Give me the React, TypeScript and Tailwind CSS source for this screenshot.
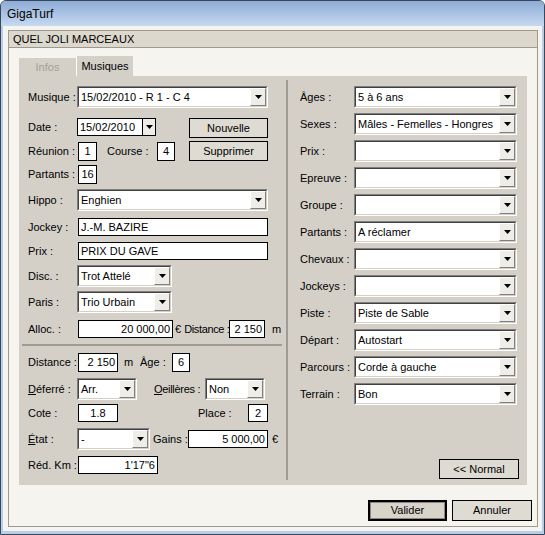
import React from 'react';

// petite flèche des listes déroulantes
const Arrow = () => (
  <svg width="7" height="4" viewBox="0 0 7 4">
    <path d="M0 0h7L3.5 4z" fill="#000" />
  </svg>
);

const Combo = ({ w, value = '' }: { w: string; value?: string }) => (
  <div className={`${w} h-[22px] shrink-0 border border-t-[#808080] border-l-[#808080] border-r-white border-b-white`}>
    <div className="h-full flex bg-white border border-t-[#404040] border-l-[#404040] border-r-[#d4d0c8] border-b-[#d4d0c8]">
      <div className="flex-1 pl-[2px] flex items-center whitespace-nowrap overflow-hidden">{value}</div>
      <div className="w-[16px] h-full flex items-center justify-center bg-[#eeede8] border border-t-white border-l-white border-r-[#808080] border-b-[#808080]">
        <Arrow />
      </div>
    </div>
  </div>
);

const Box = ({ w, h = 'h-[18px]', value = '', align = 'justify-start' }: { w: string; h?: string; value?: string; align?: string }) => (
  <div className={`${w} ${h} shrink-0 border border-black bg-white flex items-center px-[2px] whitespace-nowrap ${align}`}>{value}</div>
);

const Btn = ({ w, h, label }: { w: string; h: string; label: string }) => (
  <div className={`${w} ${h} border border-black bg-[#dedbd2] flex items-center justify-center`}>{label}</div>
);

const App = () => {
  const rightRows = [
    { label: 'Âges :', value: '5 à 6 ans' },
    { label: 'Sexes :', value: 'Mâles - Femelles - Hongres' },
    { label: 'Prix :', value: '' },
    { label: 'Epreuve :', value: '' },
    { label: 'Groupe :', value: '' },
    { label: 'Partants :', value: 'A réclamer' },
    { label: 'Chevaux :', value: '' },
    { label: 'Jockeys :', value: '' },
    { label: 'Piste :', value: 'Piste de Sable' },
    { label: 'Départ :', value: 'Autostart' },
    { label: 'Parcours :', value: 'Corde à gauche' },
    { label: 'Terrain :', value: 'Bon' },
  ];

  return (
    <div className="w-[545px] h-[535px] flex flex-col bg-[#b7cde8] border border-[#39475a] rounded-t-[6px] overflow-hidden text-[11px] text-black font-['Liberation_Sans',Arial,sans-serif]">
      {/* barre de titre */}
      <div className="h-[25px] shrink-0 bg-linear-to-b from-[#8eacd6] to-[#c6d9f0] flex items-center pl-[6px] text-[12px]">
        GigaTurf
      </div>

      {/* zone cliente */}
      <div className="flex-1 mx-[2px] mb-[3px] bg-[#f5f4ee] flex flex-col pt-[4px] pl-[5px] pr-[4px] pb-[4px]">
        <div className="flex-1 border border-[#9d9990] flex flex-col">
          <div className="h-[17px] shrink-0 bg-[#dcd8cd] border-b border-[#9d9990] pl-[4px] flex items-center">
            QUEL JOLI MARCEAUX
          </div>

          <div className="flex-1 flex flex-col pt-[8px]">
            {/* onglets */}
            <div className="h-[20px] mx-[10px] flex items-end">
              <div className="w-[57px] h-[18px] bg-[#d4d0c8] text-[#a39f97] flex items-center justify-center">Infos</div>
              <div className="w-[57px] h-[20px] bg-[#d4d0c8] border-l border-white flex items-center justify-center">Musiques</div>
            </div>

            {/* panneau */}
            <div className="h-[409px] mx-[10px] bg-[#d4d0c8] flex">
              {/* colonne gauche */}
              <div className="w-[267px] flex flex-col pt-[10px]">
                <div className="h-[22px] pl-[9px] flex items-center">
                  <span className="w-[49px]">Musique :</span>
                  <Combo w="w-[191px]" value="15/02/2010 - R 1 - C 4" />
                </div>

                <div className="mt-[10px] h-[20px] pl-[9px] flex items-start">
                  <span className="w-[49px] h-[18px] flex items-center">Date :</span>
                  <div className="flex">
                    <Box w="w-[66px]" value="15/02/2010" />
                    <div className="w-[13px] h-[18px] border border-l-0 border-black bg-[#eeede8] flex items-center justify-center">
                      <Arrow />
                    </div>
                  </div>
                  <div className="ml-[33px]">
                    <Btn w="w-[79px]" h="h-[20px]" label="Nouvelle" />
                  </div>
                </div>

                <div className="mt-[3px] h-[20px] pl-[9px] flex items-center">
                  <span className="w-[50px]">Réunion :</span>
                  <Box w="w-[19px]" h="h-[19px]" value="1" align="justify-center" />
                  <span className="ml-[10px] w-[50px]">Course :</span>
                  <Box w="w-[18px]" h="h-[19px]" value="4" align="justify-center" />
                  <div className="ml-[14px]">
                    <Btn w="w-[79px]" h="h-[20px]" label="Supprimer" />
                  </div>
                </div>

                <div className="mt-[4px] h-[19px] pl-[9px] flex items-center">
                  <span className="w-[50px]">Partants :</span>
                  <Box w="w-[19px]" h="h-[19px]" value="16" align="justify-center" />
                </div>

                <div className="mt-[5px] h-[22px] pl-[9px] flex items-center">
                  <span className="w-[49px]">Hippo :</span>
                  <Combo w="w-[191px]" value="Enghien" />
                </div>

                <div className="mt-[7px] h-[18px] pl-[9px] flex items-center">
                  <span className="w-[50px]">Jockey :</span>
                  <Box w="w-[190px]" value="J.-M. BAZIRE" />
                </div>

                <div className="mt-[6px] h-[18px] pl-[9px] flex items-center">
                  <span className="w-[50px]">Prix :</span>
                  <Box w="w-[190px]" value="PRIX DU GAVE" />
                </div>

                <div className="mt-[5px] h-[22px] pl-[9px] flex items-center">
                  <span className="w-[49px]">Disc. :</span>
                  <Combo w="w-[95px]" value="Trot Attelé" />
                </div>

                <div className="mt-[4px] h-[22px] pl-[9px] flex items-center">
                  <span className="w-[49px]">Paris :</span>
                  <Combo w="w-[95px]" value="Trio Urbain" />
                </div>

                <div className="mt-[7px] h-[18px] pl-[9px] flex items-center whitespace-nowrap">
                  <span className="w-[50px]">Alloc. :</span>
                  <Box w="w-[95px]" value="20 000,00" align="justify-end" />
                  <div className="w-[56px] shrink-0 flex items-center">
                    <span className="ml-[2px]">€</span>
                    <span className="ml-[3px] tracking-[-0.35px]">Distance :</span>
                  </div>
                  <Box w="w-[36px]" value="2 150" align="justify-end" />
                  <span className="ml-[7px]">m</span>
                </div>

                <div className="mt-[6px] ml-[3px] w-[260px] h-[2px] bg-[#a09c94]" />

                <div className="mt-[7px] h-[19px] pl-[9px] flex items-center whitespace-nowrap">
                  <span className="w-[50px]">Distance :</span>
                  <Box w="w-[40px]" h="h-[19px]" value="2 150" align="justify-end" />
                  <span className="w-[22px] pl-[6px]">m</span>
                  <span className="w-[32px]">Âge :</span>
                  <Box w="w-[18px]" h="h-[19px]" value="6" align="justify-center" />
                </div>

                <div className="mt-[6px] h-[22px] pl-[9px] flex items-center whitespace-nowrap">
                  <span className="w-[49px]"><span className="underline">D</span>éferré :</span>
                  <Combo w="w-[60px]" value="Arr." />
                  <span className="ml-[17px] w-[51px] shrink-0 tracking-[-0.3px]"><span className="underline">O</span>eillères :</span>
                  <Combo w="w-[60px]" value="Non" />
                </div>

                <div className="mt-[4px] h-[18px] pl-[9px] flex items-center whitespace-nowrap">
                  <span className="w-[50px]">Cote :</span>
                  <Box w="w-[40px]" value="1.8" align="justify-center" />
                  <span className="ml-[80px] w-[50px]">Place :</span>
                  <Box w="w-[20px]" value="2" align="justify-center" />
                </div>

                <div className="mt-[6px] h-[22px] pl-[9px] flex items-center whitespace-nowrap">
                  <span className="w-[49px]"><span className="underline">É</span>tat :</span>
                  <Combo w="w-[73px]" value="-" />
                  <span className="ml-[3px] w-[35px]">Gains :</span>
                  <Box w="w-[80px]" value="5 000,00" align="justify-end" />
                  <span className="ml-[4px]">€</span>
                </div>

                <div className="mt-[6px] h-[18px] pl-[9px] flex items-center whitespace-nowrap">
                  <span className="w-[50px]">Réd. Km :</span>
                  <Box w="w-[80px]" value={'1\'17"6'} align="justify-end" />
                </div>
              </div>

              {/* séparateur vertical */}
              <div className="w-[2px] mt-[4px] mb-[5px] bg-[#a09c94]" />

              {/* colonne droite */}
              <div className="flex-1 flex flex-col pt-[10px] pl-[12px] pb-[6px]">
                {rightRows.map((r, i) => (
                  <div key={r.label} className={`h-[22px] flex items-center whitespace-nowrap ${i > 0 ? 'mt-[5px]' : ''}`}>
                    <span className="w-[54px]">{r.label}</span>
                    <Combo w="w-[163px]" value={r.value} />
                  </div>
                ))}
                <div className="mt-auto flex justify-end pr-[8px]">
                  <Btn w="w-[80px]" h="h-[20px]" label="<< Normal" />
                </div>
              </div>
            </div>

            {/* boutons du bas */}
            <div className="mt-[15px] h-[21px] flex justify-end gap-[5px] pr-[5px]">
              <div className="w-[79px] h-[21px] border-2 border-black">
                <div className="h-full border border-[#8c8880] bg-[#d8d4ca] flex items-center justify-center">Valider</div>
              </div>
              <Btn w="w-[80px]" h="h-[21px]" label="Annuler" />
            </div>
          </div>
        </div>
      </div>
    </div>
  );
};

export default App;
